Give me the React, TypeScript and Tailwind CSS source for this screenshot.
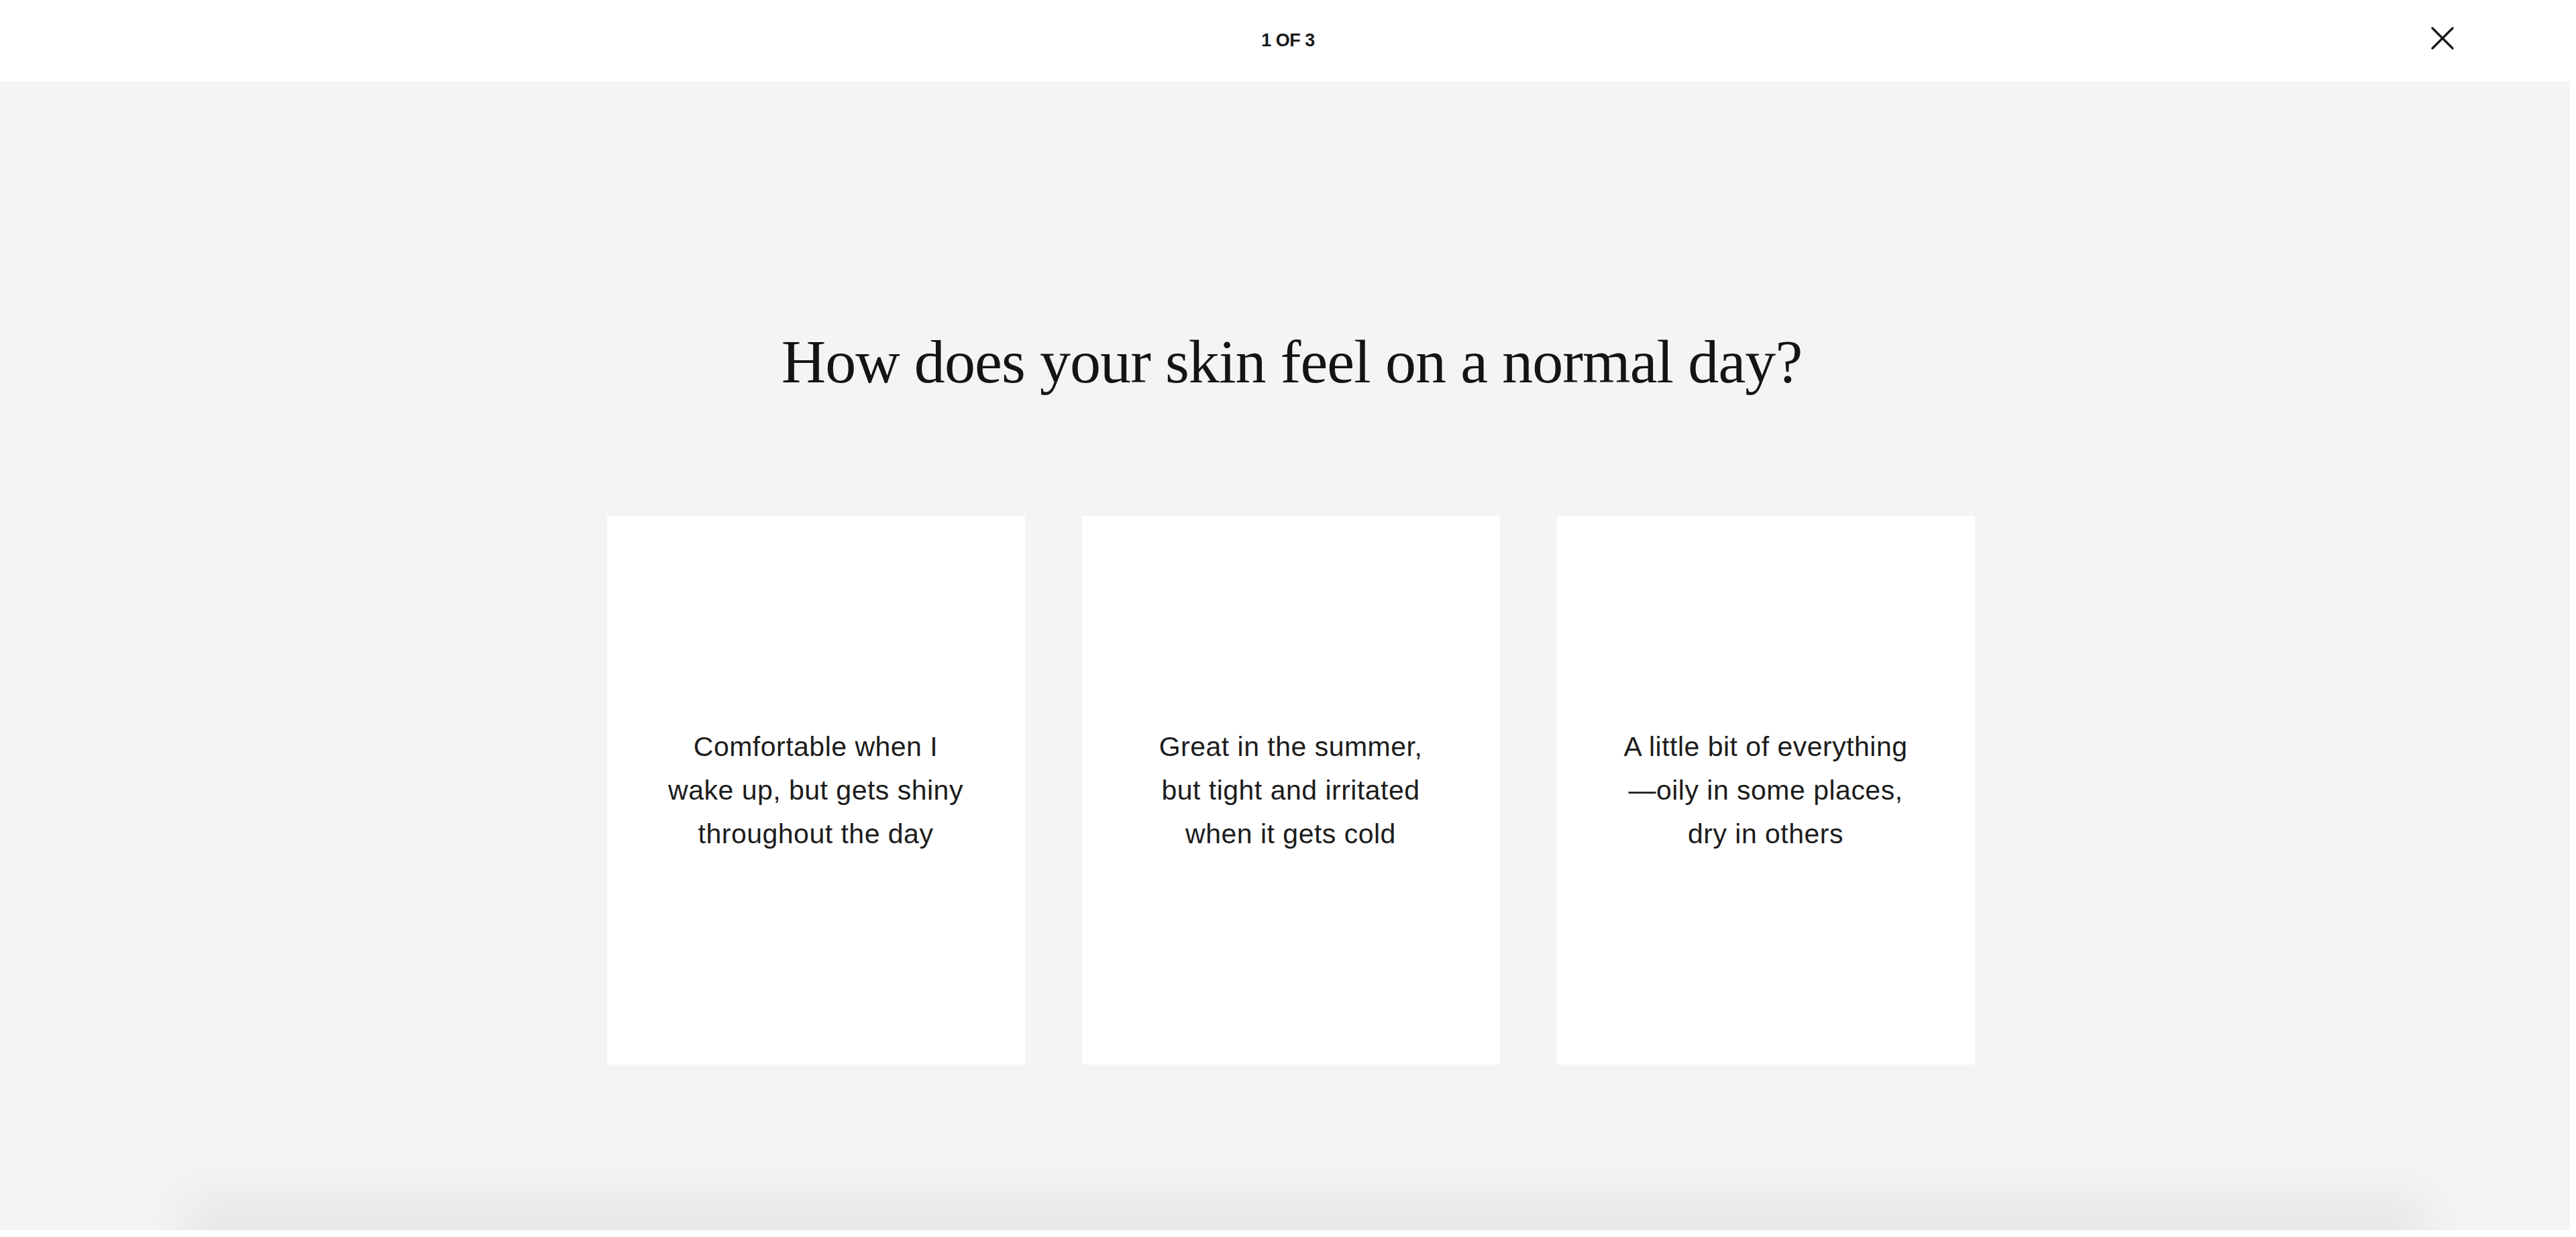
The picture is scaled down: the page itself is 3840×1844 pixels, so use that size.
const answers = [
  ['Comfortable when I', 'wake up, but gets shiny', 'throughout the day'],
  ['Great in the summer,', 'but tight and irritated', 'when it gets cold'],
  ['A little bit of everything', '\u2014oily in some places,', 'dry in others'],
];

function QuizHeader() {
  return (
    <header className="h-[121px] bg-white flex items-center justify-center relative">
      <span className="font-['Liberation_Sans',Arial,sans-serif] font-bold text-[27px] tracking-[-0.02em] text-[#1a1a1a]">
        1 OF 3
      </span>
      {/* Close */}
      <button className="absolute right-[182px] top-[40px] w-[34px] h-[34px] flex items-center justify-center text-[#1a1a1a]">
        <svg width="34" height="34" viewBox="0 0 34 34" fill="none" stroke="currentColor" strokeWidth="3.4" strokeLinecap="round">
          <line x1="2" y1="2" x2="32" y2="32" />
          <line x1="32" y1="2" x2="2" y2="32" />
        </svg>
      </button>
    </header>
  );
}

function AnswerCard({ lines }: { lines: string[] }) {
  return (
    <button className="w-[623px] h-[818px] bg-white flex items-center justify-center">
      <p className="font-['Liberation_Sans',Arial,sans-serif] text-[41px] leading-[65px] tracking-[0.012em] text-[#1c1c1c] text-center">
        {lines.map((line, i) => (
          <span key={i} className="block">
            {line}
          </span>
        ))}
      </p>
    </button>
  );
}

export default function App() {
  return (
    <div className="w-[3840px] h-[1844px] bg-white overflow-hidden flex flex-col">
      <QuizHeader />

      <main className="w-[3831px] h-[1713px] bg-[#f3f5f4] overflow-hidden flex flex-col items-center">
        {/* Question */}
        <h1 className="pt-[372px] font-['Liberation_Serif','Times_New_Roman',serif] text-[92px] leading-[92px] tracking-[-0.01em] text-[#141414] pl-[20px]">
          How does your skin feel on a normal day?
        </h1>

        {/* Answers */}
        <div className="mt-[184px] flex gap-[85px] pl-[17px]">
          {answers.map((lines, i) => (
            <AnswerCard key={i} lines={lines} />
          ))}
        </div>

        <div className="flex-1" />
        {/* Footer shadow */}
        <div className="w-[3250px] h-0 ml-[60px] shadow-[0_0_80px_45px_rgba(0,0,0,0.065)]" />
      </main>
    </div>
  );
}
